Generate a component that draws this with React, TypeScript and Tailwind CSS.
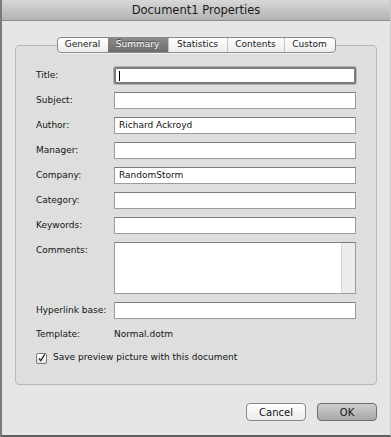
import React from "react";

const font = { fontFamily: '"DejaVu Sans", "Liberation Sans", sans-serif' };

function Field({ label, value, focused }: { label: string; value?: string; focused?: boolean }) {
  return (
    <div className="flex h-[17px] items-center">
      <div className="w-[78px] text-[9px] text-[#141414]">{label}</div>
      <div
        className={
          focused
            ? "relative flex h-[17px] w-[242px] items-center border-2 border-[#7c7c7c] bg-white shadow-[0_0_0_1px_#b4b4b4] rounded-[2px]"
            : "flex h-[17px] w-[242px] items-center border border-[#9c9c9c] border-t-[#7e7e7e] bg-white"
        }
      >
        {focused && <div className="ml-[3px] h-[10px] w-[1px] bg-black" />}
        {value && <span className="pl-[4px] text-[9px] text-[#111]">{value}</span>}
      </div>
    </div>
  );
}

export default function App() {
  const tabs = ["General", "Summary", "Statistics", "Contents", "Custom"];
  const widths = ["w-[50px]", "w-[60px]", "w-[59px]", "w-[57px]", "w-[51px]"];
  return (
    <div
      className="flex h-[437px] w-[391px] flex-col border-b-2 border-l-2 border-r border-b-[#5e5e5e] border-l-[#7a7a7a] border-r-[#c9c9c9] bg-[#e6e6e6]"
      style={font}
    >
      <div className="flex h-[21px] shrink-0 items-center justify-center border-b border-[#8c8c8c] bg-gradient-to-b from-[#d8d8d8] to-[#b3b3b3] pt-[2px] text-[11.5px] text-[#1a1a1a]">
        Document1 Properties
      </div>
      <div className="flex flex-col pl-[13px] pr-[13px] pt-[24px]">
        <div className="flex h-[340px] flex-col rounded-[4px] border border-[#b8b8b8] bg-[#dedede] pl-[20px]">
          <div className="-mt-[9px] flex justify-center pr-[20px]">
            <div className="flex h-[16px] overflow-hidden rounded-[4px] border border-[#8a8a8a] bg-gradient-to-b from-white to-[#ededed] shadow-[0_1px_0_#f4f4f4]">
              {tabs.map((t, i) => (
                <div
                  key={t}
                  className={
                    (i === 1
                      ? "bg-gradient-to-b from-[#8a8a8a] to-[#6e6e6e] text-white [text-shadow:0_-1px_0_#444] "
                      : "text-[#1a1a1a] ") +
                    (i > 1 ? "border-l border-[#c4c4c4] " : "") +
                    widths[i] +
                    " flex items-center justify-center text-[9px]"
                  }
                >
                  {t}
                </div>
              ))}
            </div>
          </div>
          <div className="mt-[14px] flex flex-col gap-[8px]">
            <Field label="Title:" focused />
            <Field label="Subject:" />
            <Field label="Author:" value="Richard Ackroyd" />
            <Field label="Manager:" />
            <Field label="Company:" value="RandomStorm" />
            <Field label="Category:" />
            <Field label="Keywords:" />
            <div className="flex items-start">
              <div className="flex h-[17px] w-[78px] items-center text-[9px] text-[#141414]">Comments:</div>
              <div className="flex h-[52px] w-[242px] justify-end border border-[#9c9c9c] border-t-[#7e7e7e] bg-white">
                <div className="h-full w-[14px] border-l border-[#d6d6d6] bg-[#ececec]" />
              </div>
            </div>
            <Field label="Hyperlink base:" />
          </div>
          <div className="mt-[7px] flex h-[17px] items-center text-[9px] text-[#141414]">
            <div className="w-[78px]">Template:</div>
            <div>Normal.dotm</div>
          </div>
          <div className="mt-[8px] flex h-[14px] items-center text-[9px] text-[#141414]">
            <div className="flex h-[11px] w-[11px] items-center justify-center rounded-[2px] border border-[#7a7a7a] bg-gradient-to-b from-white to-[#e4e4e4]">
              <svg width="11" height="11" viewBox="0 0 11 11">
                <path d="M2.5 5.5 L4.5 8 L9.5 0.5" fill="none" stroke="#222" strokeWidth="1.6" />
              </svg>
            </div>
            <span className="ml-[6px]">Save preview picture with this document</span>
          </div>
        </div>
        <div className="mt-[18px] flex justify-end gap-[11px]">
          <div className="flex h-[18px] w-[60px] items-center justify-center rounded-[4px] border border-[#8a8a8a] bg-gradient-to-b from-white to-[#ececec] text-[10px] text-[#111]">
            Cancel
          </div>
          <div className="flex h-[18px] w-[60px] items-center justify-center rounded-[4px] border border-[#6e6e6e] bg-gradient-to-b from-[#cfcfcf] to-[#a8a8a8] text-[10px] text-[#111]">
            OK
          </div>
        </div>
      </div>
    </div>
  );
}
